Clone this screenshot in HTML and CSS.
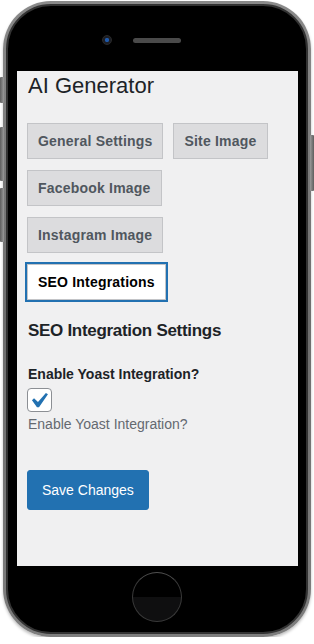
FILE: index.html
```html
<!DOCTYPE html>
<html lang="en">
<head>
<meta charset="utf-8">
<title>AI Generator</title>
<link rel="stylesheet" href="styles.css">
</head>
<body>
<div class="phone">
  <span class="side-btn mute"></span>
  <span class="side-btn vol-up"></span>
  <span class="side-btn vol-down"></span>
  <span class="side-btn power"></span>
  <div class="bezel">
    <div class="top">
      <span class="camera"></span>
      <span class="speaker"></span>
    </div>
    <div class="screen">
      <h1 class="title">AI Generator</h1>
      <nav class="tabs">
        <a class="tab">General Settings</a>
        <a class="tab">Site Image</a>
        <a class="tab">Facebook Image</a>
        <a class="tab">Instagram Image</a>
        <a class="tab tab-active">SEO Integrations</a>
      </nav>
      <h2 class="section-title">SEO Integration Settings</h2>
      <div class="field-label">Enable Yoast Integration?</div>
      <span class="checkbox">
        <svg width="24" height="24" viewBox="3.2 1.7 15.6 15.6" aria-hidden="true"><path d="M14.83 4.89l1.34.94-5.81 8.38H9.02L5.78 9.67l1.34-1.25 2.57 2.4z" fill="#2271b1"/></svg>
      </span>
      <p class="description">Enable Yoast Integration?</p>
      <button class="save">Save Changes</button>
    </div>
    <div class="bottom">
      <span class="home"></span>
    </div>
  </div>
</div>
</body>
</html>
```
FILE: styles.css
```css
* { box-sizing: border-box; }
html, body { margin: 0; padding: 0; background: #fff; }
body { font-family: "Liberation Sans", Arial, sans-serif; }

.phone {
  position: relative;
  width: 308px;
  height: 636px;
  margin: 1px 0 0 3px;
  padding: 3px;
  border-radius: 48px;
  background: linear-gradient(180deg, #8a8a8a 0%, #6e6e6e 50%, #7e7e7e 100%);
  box-shadow: 0 2px 3px rgba(0,0,0,0.25);
}
.side-btn {
  position: absolute;
  width: 4px;
  background: linear-gradient(90deg, #5e5e5e, #9a9a9a);
  border-radius: 1px;
}
.mute { left: -3px; top: 76px; height: 26px; }
.vol-up { left: -3px; top: 126px; height: 54px; }
.vol-down { left: -3px; top: 187px; height: 54px; }
.power { right: -3px; top: 134px; height: 56px; background: linear-gradient(90deg, #9a9a9a, #5e5e5e); }

.bezel {
  height: 100%;
  border-radius: 45px;
  background: #000;
  border: 2px solid #333;
  display: flex;
  flex-direction: column;
}
.top {
  height: 65px;
  padding-top: 29px;
  display: flex;
  justify-content: center;
  align-items: flex-start;
  gap: 21px;
  padding-right: 31px;
}
.camera {
  width: 10px;
  height: 10px;
  border-radius: 50%;
  background: radial-gradient(circle, #1e58a8 0 30%, #1b1d24 45% 100%);
  border: 1px solid #2a2a2a;
}
.speaker {
  width: 48px;
  height: 5px;
  margin-top: 3px;
  border-radius: 3px;
  background: #4a4a4a;
}
.screen {
  width: 281px;
  height: 495px;
  margin-left: 9px;
  background: #f0f0f1;
  padding: 0 10px;
  overflow: hidden;
  color: #1d2327;
}
.title {
  margin: 0;
  font-size: 22px;
  line-height: 29px;
  font-weight: 400;
  padding-left: 1px;
}
.tabs {
  margin-top: 23px;
  display: flex;
  flex-wrap: wrap;
  gap: 11px 10px;
}
.tab {
  display: block;
  border: 1px solid #c3c4c7;
  background: #dcdcde;
  color: #50575e;
  font-size: 14px;
  font-weight: 700;
  line-height: 24px;
  padding: 5px 10px;
  letter-spacing: 0.2px;
  white-space: nowrap;
}
.tab-active {
  background: #fff;
  color: #000;
  box-shadow: 0 0 0 2px #2271b1;
}
.section-title {
  margin: 20px 0 0;
  font-size: 17px;
  line-height: 22px;
  font-weight: 700;
  letter-spacing: -0.3px;
  padding-left: 1px;
}
.field-label {
  margin-top: 22px;
  font-size: 14px;
  line-height: 20px;
  font-weight: 700;
  padding-left: 1px;
}
.checkbox {
  display: flex;
  margin-top: 4px;
  width: 25px;
  height: 24px;
  border: 1px solid #8c8f94;
  border-radius: 4px;
  background: #fff;
  align-items: center;
  justify-content: center;
}
.checkbox svg { display: block; flex: none; }
.description {
  margin: 2px 0 0;
  font-size: 14px;
  line-height: 20px;
  color: #646970;
  padding-left: 1px;
}
.save {
  display: block;
  margin-top: 36px;
  height: 40px;
  padding: 0 14px;
  border: 1px solid #2271b1;
  border-radius: 3px;
  background: #2271b1;
  color: #fff;
  font-family: "Liberation Sans", Arial, sans-serif;
  font-size: 14px;
  line-height: 38px;
}
.bottom {
  flex: 1;
  display: flex;
  justify-content: center;
  align-items: flex-start;
  padding-top: 6px;
}
.home {
  width: 50px;
  height: 50px;
  border-radius: 50%;
  border: 1.5px solid #3a3a3a;
  border-top-color: #505050;
  background: linear-gradient(180deg, #000 50%, #0f0f10 50%);
}
```
